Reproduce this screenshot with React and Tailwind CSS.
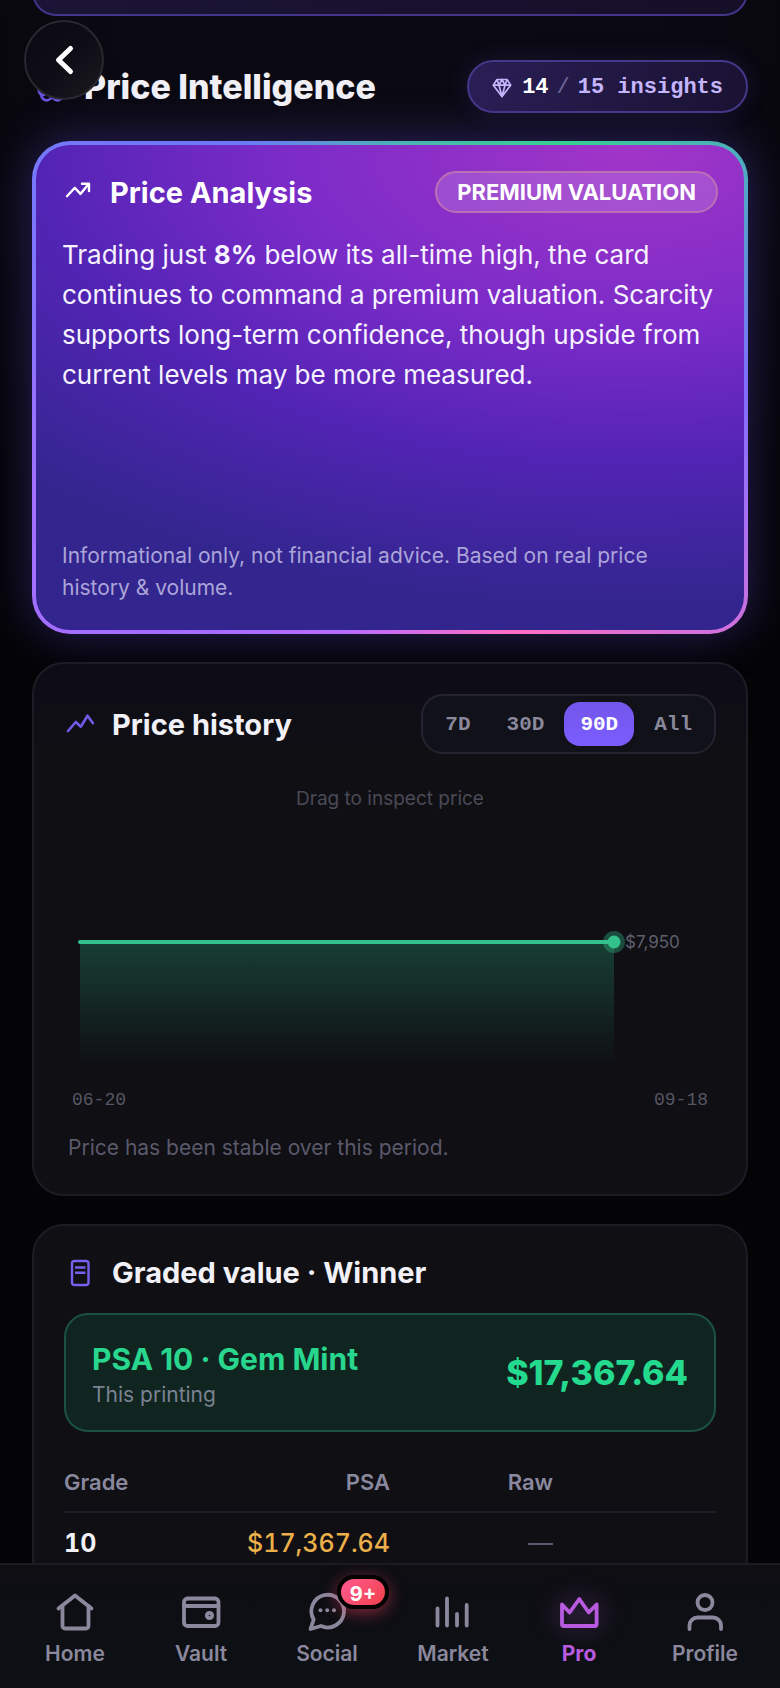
import { useState } from 'react';
import { Brain } from 'lucide-react';

const ranges = ['7D', '30D', '90D', 'All'];

const grades = [{ grade: '10', psa: '$17,367.64', raw: '—' }];

const navItems = [
  {
    label: 'Home',
    icon: (
      <>
        <path d="M7.5 20.5 24 7.5l16.5 13" />
        <path d="M11.5 18v20a2.5 2.5 0 0 0 2.5 2.5h21a2.5 2.5 0 0 0 2.5-2.5V18" />
      </>
    ),
  },
  {
    label: 'Vault',
    icon: (
      <>
        <rect x="7" y="10.5" width="34.5" height="27.5" rx="3.5" />
        <path d="M7 18h34.5" />
        <circle cx="32.5" cy="27.5" r="2.7" />
      </>
    ),
  },
  {
    label: 'Social',
    badge: '9+',
    icon: (
      <>
        <path d="M7.5 41l3.2-9.5A16.3 16.3 0 1 1 18 38z" />
        <g fill="currentColor" stroke="none">
          <circle cx="17.5" cy="22.3" r="2" />
          <circle cx="24.2" cy="22.3" r="2" />
          <circle cx="31" cy="22.3" r="2" />
        </g>
      </>
    ),
  },
  {
    label: 'Market',
    icon: <path d="M8.5 20.5v17M18 10.5v27M28 26v11.5M37.7 17v20.5" />,
  },
  {
    label: 'Pro',
    active: true,
    icon: <path d="M7 16.5v19.7a1.8 1.8 0 0 0 1.8 1.8h31a1.8 1.8 0 0 0 1.8-1.8V16.5L33.7 24.5 24.3 11 14.6 24.5z" />,
  },
  {
    label: 'Profile',
    icon: (
      <>
        <circle cx="24" cy="14.5" r="7.5" />
        <path d="M8.5 41v-3.5a8 8 0 0 1 8-8h15.5a8 8 0 0 1 8 8V41" />
      </>
    ),
  },
];

const BackButton = () => (
  <button
    aria-label="Back"
    className="absolute left-6 top-5 z-10 flex h-20 w-20 items-center justify-center rounded-full border-2 border-[#29282f] bg-linear-135 from-[#0b0a14] via-[#0e0d16] to-[#1b1a20]"
  >
    <svg viewBox="0 0 80 80" className="h-20 w-20 shrink-0" fill="none" stroke="#fff" strokeWidth="5" strokeLinecap="round" strokeLinejoin="round">
      <path d="M46.5 28.5 34.5 40l12 11.5" />
    </svg>
  </button>
);

const InsightsPill = () => (
  <div className="flex items-center rounded-full border-2 border-[#45378a] bg-linear-100 from-[#2a1e56] to-[#1a1232] px-[23px] pb-[11px] pt-[13px] font-['Liberation_Mono',monospace] text-[22px] font-bold leading-[25px] text-[#c4b5fd] shadow-[0_0_24px_rgba(110,80,240,0.15)]">
    <svg viewBox="0 0 20 20" className="mr-2.5 h-5 w-5" fill="none" stroke="currentColor" strokeWidth="1.7" strokeLinejoin="round">
      <path d="M5 1.5h10l3.7 5.7L10 18.5 1.3 7.2z" />
      <path d="M1.3 7.2h17.4M5 1.5l2 5.7 3 11.3 3-11.3 2-5.7M7 7.2l3-5.7 3 5.7" />
    </svg>
    <span className="text-white">14</span>
    <span className="mx-2 font-normal text-[#6f6795]">/</span>
    <span>15 insights</span>
  </div>
);

const PriceAnalysis = () => (
  <section className="mt-7 rounded-[38px] bg-[conic-gradient(#4fb0b8_0deg,#36d090_36deg,#52a8c4_60deg,#806cff_90deg,#a070f8_107deg,#cc70de_124deg,#ff6ec4_153deg,#b86cff_190deg,#a66cff_216deg,#a070ff_255deg,#7678fb_300deg,#6c79f6_328deg,#4fb0b8_360deg)] p-1 shadow-[0_0_48px_rgba(100,75,225,0.38)]">
    <div className="flex min-h-[485px] flex-col rounded-[34px] bg-[radial-gradient(140%_108%_at_84%_0%,#a235c8_0%,#7a2bc8_36%,#5224b4_60%,#32268e_88%)] p-[26px]">
      <div className="flex items-center justify-between">
        <div className="flex items-center gap-4">
          <svg viewBox="0 0 32 32" className="h-8 w-8" fill="none" stroke="#fff" strokeWidth="2.4" strokeLinecap="round" strokeLinejoin="round">
            <path d="M5 20.2l7.8-8.4 5.6 6.1L26.6 8M20 7.7h7v7.4" />
          </svg>
          <h2 className="text-[29px] font-bold leading-[33px] text-white">Price Analysis</h2>
        </div>
        <span className="rounded-full border-2 border-[#bb70b5] bg-white/15 px-5 text-[22px] font-bold leading-[38px] text-white">
          PREMIUM VALUATION
        </span>
      </div>
      <p className="mt-[22px] text-[26px] leading-10 text-[#f6f2ff]">
        Trading just <strong className="font-bold">8%</strong> below its all-time high, the card continues to command a
        premium valuation. Scarcity supports long-term confidence, though upside from current levels may be more measured.
      </p>
      <p className="mt-auto text-[21px] leading-8 text-[#aca5d9]">
        Informational only, not financial advice. Based on real price history &amp; volume.
      </p>
    </div>
  </section>
);

const PriceHistory = () => {
  const [range, setRange] = useState('90D');

  return (
    <section className="mt-7 rounded-[32px] border-2 border-[#1d1c25] bg-linear-to-b from-[#0d0c17] via-[#0f0f14] via-15% to-[#0f0f14] p-[30px]">
      <div className="flex items-center justify-between">
        <div className="flex items-center gap-4">
          <svg viewBox="0 0 32 32" className="h-8 w-8" fill="none" stroke="#7259e8" strokeWidth="2.6" strokeLinecap="round" strokeLinejoin="round">
            <path d="M4 23l7.8-9 5 4.7 6.7-11 5.3 7.4" />
          </svg>
          <h2 className="text-[29px] font-bold leading-[33px] text-[#f2f1f7]">Price history</h2>
        </div>
        <div className="flex gap-1 rounded-[22px] border-2 border-[#25232f] bg-[#11111a] p-1.5">
          {ranges.map((item) => (
            <button
              key={item}
              onClick={() => setRange(item)}
              className={`rounded-2xl px-4 pt-0.5 font-['Liberation_Mono',monospace] text-[21px] font-bold leading-[42px] ${
                range === item ? 'bg-linear-to-b from-[#7257ea] to-[#7b5cff] text-white' : 'text-[#8a889b]'
              }`}
            >
              {item}
            </button>
          ))}
        </div>
      </div>
      <p className="mt-8 text-center text-[19px] leading-[26px] text-[#4b4a56]">Drag to inspect price</p>
      <svg viewBox="0 0 652 272" className="w-full">
        <defs>
          <linearGradient id="area" x1="0" y1="0" x2="0" y2="1">
            <stop offset="0" stopColor="#2fc38a" stopOpacity="0.26" />
            <stop offset="1" stopColor="#2fc38a" stopOpacity="0" />
          </linearGradient>
        </defs>
        <rect x="16" y="130" width="534" height="124" fill="url(#area)" />
        <path d="M16 130h534" stroke="#33c18c" strokeWidth="4" strokeLinecap="round" />
        <circle cx="550" cy="130" r="11" fill="#33c18c" fillOpacity="0.35" />
        <circle cx="550" cy="130" r="6.5" fill="#33c18c" />
        <text x="561" y="136" fill="#605f6c" className="text-[17px]">$7,950</text>
      </svg>
      <div className="mt-1 flex justify-between px-2 font-['Liberation_Mono',monospace] text-[18px] leading-6 text-[#575663]">
        <span>06-20</span>
        <span>09-18</span>
      </div>
      <p className="mt-5 px-1 text-[21px] leading-8 text-[#5b596b]">Price has been stable over this period.</p>
    </section>
  );
};

const GradedValue = () => (
  <section className="mt-7 rounded-[32px] border-2 border-[#1d1c25] bg-[#0f0f14] p-[30px]">
    <div className="flex items-center gap-4">
      <svg viewBox="0 0 32 32" className="h-8 w-8" fill="none" stroke="#7a5fee" strokeWidth="2.4" strokeLinejoin="round">
        <rect x="8" y="4" width="16.5" height="24" rx="2.5" />
        <path d="M11 10.5h10.5M11 15.7h10.5" />
      </svg>
      <h2 className="text-[29px] font-bold leading-[33px] text-[#f2f1f7]">Graded value · Winner</h2>
    </div>
    <div className="mt-6 flex items-center justify-between rounded-3xl border-2 border-[#1b5240] bg-[#112520] px-[26px] py-[22px]">
      <div>
        <p className="text-[30px] font-bold leading-[44px] text-[#28d68e]">PSA 10 · Gem Mint</p>
        <p className="text-[21px] leading-[27px] text-[#7b8293]">This printing</p>
      </div>
      <p className="text-[34px] font-extrabold leading-10 text-[#24da8f]">$17,367.64</p>
    </div>
    <table className="mt-[22px] w-full table-fixed">
      <thead>
        <tr className="h-[58px] border-b-2 border-[#1d1c25] text-[22px] text-[#8a889e]">
          <th className="text-left font-semibold">Grade</th>
          <th className="text-right font-semibold">PSA</th>
          <th className="text-right font-semibold">Raw</th>
          <th aria-label="More" />
        </tr>
      </thead>
      <tbody>
        {grades.map((row) => (
          <tr key={row.grade} className="h-[62px] text-[25px] tabular-nums">
            <td className="font-bold text-[#f2f1f7]">{row.grade}</td>
            <td className="text-right font-medium text-[#ecb04a]">{row.psa}</td>
            <td className="text-right text-[#5b596b]">{row.raw}</td>
            <td />
          </tr>
        ))}
      </tbody>
    </table>
  </section>
);

const BottomNav = () => (
  <nav className="grid grid-cols-6 border-t-2 border-[#1c1c24] bg-linear-to-b from-[#0e0e13] to-[#0c1014] px-3 pb-5 pt-[23px]">
    {navItems.map((item) => (
      <a
        key={item.label}
        href={`#${item.label.toLowerCase()}`}
        className={`flex flex-col items-center gap-1 ${item.active ? 'text-[#b95be0]' : 'text-[#8b889d]'}`}
      >
        <span className="relative">
          <svg
            viewBox="0 0 48 48"
            className={`h-12 w-12 ${item.active ? 'drop-shadow-[0_0_12px_rgba(185,91,224,0.5)]' : ''}`}
            fill="none"
            stroke="currentColor"
            strokeWidth="3.8"
            strokeLinecap="round"
            strokeLinejoin="round"
          >
            {item.icon}
          </svg>
          {item.badge && (
            <span className="absolute -top-[13px] left-[34px] w-[52px] rounded-full border-4 border-black bg-linear-135 from-[#ff5c9a] to-[#f03c3c] bg-origin-border pt-[5px] text-center text-[20px] font-bold leading-[21px] text-white shadow-[0_4px_16px_rgba(244,63,94,0.5)]">
              {item.badge}
            </span>
          )}
        </span>
        <span className={`text-[21px] leading-7 ${item.active ? 'font-bold' : 'font-semibold'}`}>{item.label}</span>
      </a>
    ))}
  </nav>
);

const App = () => {
  return (
    <div className="relative flex h-screen flex-col bg-[#040406] font-[Inter,sans-serif]">
      <BackButton />
      <main className="min-h-0 flex-1 overflow-y-auto bg-[radial-gradient(70%_640px_at_50%_0%,#0b0a12_0%,#0a0911_60%,transparent_100%)] px-8 pb-8 [scrollbar-width:none]">
        <div className="-mt-8 h-12 rounded-[32px] border-2 border-[#43358a] bg-linear-to-r from-[#1b1436] to-[#150f28]" />
        <header className="mt-11 flex items-center justify-between">
          <div className="flex items-center gap-4 pl-1">
            <Brain className="h-8 w-8 text-[#6a50d8]" />
            <h1 className="text-[34px] font-extrabold leading-10 text-[#f0eff6]">Price Intelligence</h1>
          </div>
          <InsightsPill />
        </header>
        <PriceAnalysis />
        <PriceHistory />
        <GradedValue />
      </main>
      <BottomNav />
    </div>
  );
};

export default App;
